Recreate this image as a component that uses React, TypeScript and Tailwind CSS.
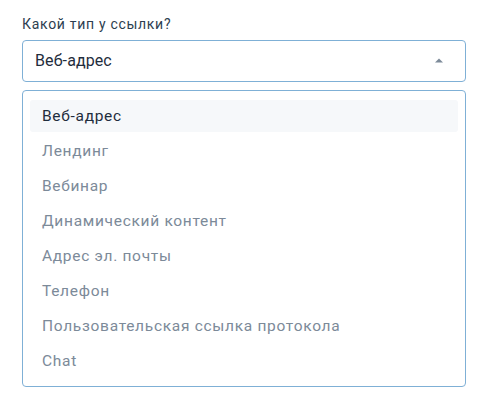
import React from 'react';

const options = [
  'Веб-адрес',
  'Лендинг',
  'Вебинар',
  'Динамический контент',
  'Адрес эл. почты',
  'Телефон',
  'Пользовательская ссылка протокола',
  'Chat',
];

export default function App() {
  const selected = 'Веб-адрес';

  return (
    <div className="w-[498px] h-[393px] bg-white px-[22px] pt-[15px] font-['Roboto',sans-serif]">
      <label className="block text-[14px] leading-[18px] tracking-[0.7px] text-[#2d3e50]">Какой тип у ссылки?</label>
      <div className="mt-[7px] w-[444px] h-[42px] flex items-center justify-between pl-[12px] pr-[22px] border border-[#7fb0d6] rounded-[4px]">
        <span className="text-[16px] tracking-[0.1px] text-[#1f2d3d]">{selected}</span>
        <svg width="8" height="5" viewBox="0 0 8 5" className="mb-[1px]">
          <path d="M0 4.5 L4 0.5 L8 4.5 Z" fill="#7c8a99" />
        </svg>
      </div>
      <div className="mt-[8px] w-[444px] h-[297px] border border-[#7fb0d6] rounded-[4px] px-[7px] pt-[9px]">
        {options.map((o) => (
          <div
            key={o}
            className={`flex items-center px-[12px] rounded-[3px] text-[15.5px] tracking-[0.7px] ${
              o === selected ? 'h-[32px] mb-[2px] pt-[2px] bg-[#f6f8fa] text-[#1f2d3d]' : 'h-[35px] text-[#7c8a99]'
            }`}
          >
            {o}
          </div>
        ))}
      </div>
    </div>
  );
}
